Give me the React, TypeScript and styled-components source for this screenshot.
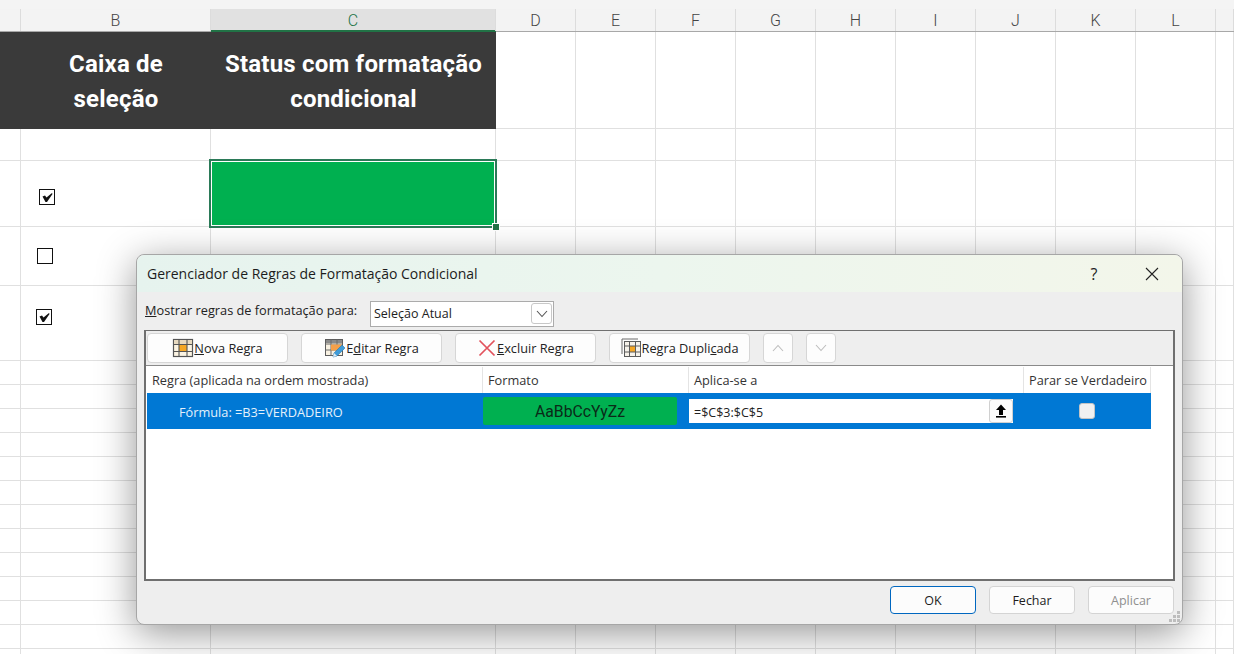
import type { ReactNode } from 'react';
import styled, { createGlobalStyle } from 'styled-components';

const GlobalStyle = createGlobalStyle`
    html, body {
        margin: 0;
        height: 100%;
        overflow: hidden;
        background: #fff;
    }
    * {
        box-sizing: border-box;
    }
`;

const uiFont = `"Open Sans", "Noto Sans", "Liberation Sans", sans-serif`;

const columns = [
    { label: '', width: 21 },
    { label: 'B', width: 190 },
    { label: 'C', width: 285 },
    ...['D', 'E', 'F', 'G', 'H', 'I', 'J', 'K', 'L'].map((label) => ({ label, width: 80 })),
    { label: '', width: 18 },
];

const rowHeights = [97, 32, 66, 59, 75, ...Array(13).fill(24)];

const checkboxes: Record<number, { left: number; top: number; checked: boolean }> = {
    2: { left: 18, top: 28, checked: true },
    3: { left: 16, top: 21, checked: false },
    4: { left: 15, top: 23, checked: true },
};

const Page = styled.div`
    position: relative;
    width: 1234px;
    height: 654px;
    overflow: hidden;
    background: #fff;
`;

const TopStrip = styled.div`
    height: 9px;
    background: #f4f4f4;
`;

const ColumnHeaderRow = styled.div`
    display: flex;
    height: 23px;
    background: #f3f3f3;
    border-bottom: 1px solid #a8a8a8;
`;

const ColumnHeader = styled.div<{ $width: number; $selected?: boolean }>`
    width: ${(p) => p.$width}px;
    flex: none;
    display: flex;
    align-items: center;
    justify-content: center;
    border-right: 1px solid #dcdcdc;
    font: 300 16px Roboto, "Liberation Sans", sans-serif;
    color: ${(p) => (p.$selected ? '#217346' : '#444')};
    background: ${(p) => (p.$selected ? '#e1e1e1' : 'transparent')};
    box-shadow: ${(p) => (p.$selected ? '0 1px 0 #217346, inset 0 -1px 0 #217346' : 'none')};
`;

const SheetGrid = styled.div`
    display: grid;
    grid-template-columns: ${columns.map((c) => `${c.width}px`).join(' ')};
    grid-template-rows: ${rowHeights.map((h) => `${h}px`).join(' ')};
`;

const Cell = styled.div`
    border-right: 1px solid #e0e0e0;
    border-bottom: 1px solid #e0e0e0;
`;

const TitleCell = styled.div`
    display: flex;
    align-items: center;
    justify-content: center;
    padding-top: 2px;
    background: #3a3a3a;
    color: #fff;
    text-align: center;
    white-space: nowrap;
    font: 700 24px/35px Roboto, "Liberation Sans", sans-serif;
    letter-spacing: 0.2px;
`;

const CheckboxCell = styled(Cell)<{ $left: number; $top: number }>`
    padding: ${(p) => p.$top}px 0 0 ${(p) => p.$left}px;
`;

const CheckBox = styled.div`
    width: 16px;
    height: 16px;
    border: 1.5px solid #111;
    background: #fff;
    display: flex;
    align-items: center;
    justify-content: center;
`;

const SelectedCell = styled.div`
    position: relative;
    height: 69px;
    width: 288px;
    margin: -2px 0 0 -2px;
    z-index: 1;
    background: #00b050;
    border: 2px solid #2b7a58;
    box-shadow: inset 0 0 0 1px #fff;
`;

const FillHandle = styled.div`
    position: absolute;
    right: -4px;
    bottom: -4px;
    width: 6px;
    height: 6px;
    background: #217346;
    outline: 1px solid #fff;
`;

const Dialog = styled.div`
    position: absolute;
    left: 136px;
    top: 254px;
    width: 1047px;
    height: 371px;
    display: flex;
    flex-direction: column;
    background: #eeeeee;
    border: 1px solid #a6a6a6;
    border-radius: 8px;
    box-shadow: 0 8px 38px rgba(0, 0, 0, 0.42);
    font: 400 12.75px ${uiFont};
    color: #222;
    z-index: 2;
`;

const TitleBar = styled.div`
    display: flex;
    align-items: center;
    height: 37px;
    flex: none;
    padding: 0 23px 0 10px;
    border-radius: 8px 8px 0 0;
    background: linear-gradient(90deg, #e6f3ee 0%, #ecf6ee 50%, #f3f6ea 100%);
`;

const DialogTitle = styled.div`
    flex: 1;
    font-size: 14px;
    color: #1c1c1c;
`;

const HelpMark = styled.div`
    width: 40px;
    font-size: 16px;
    color: #222;
    text-align: center;
    margin-right: 31px;
`;

const CloseMark = styled.svg`
    width: 14px;
    height: 14px;
    display: block;
`;

const ScopeRow = styled.div`
    display: flex;
    align-items: center;
    height: 38px;
    flex: none;
    padding: 5px 0 0 8px;
`;

const ScopeLabel = styled.div`
    width: 225px;
    margin-top: -7px;
`;

const ScopeSelect = styled.div`
    width: 184px;
    height: 26px;
    display: flex;
    align-items: center;
    justify-content: space-between;
    padding: 0 1px 0 3px;
    background: #fff;
    border: 1px solid #ababab;
    font-size: 12.5px;
`;

const SelectChevron = styled.div`
    width: 21px;
    height: 21px;
    display: flex;
    align-items: center;
    justify-content: center;
    border: 1px solid #c8c8c8;
    border-radius: 3px;
`;

const RulesPanel = styled.div`
    width: 1031px;
    height: 251px;
    margin-left: 7px;
    flex: none;
    display: flex;
    flex-direction: column;
    border: 2px solid #6f6f6f;
    border-width: 1px 2px 2px;
`;

const Toolbar = styled.div`
    height: 35px;
    flex: none;
    display: flex;
    align-items: center;
    gap: 13px;
    padding: 0 0 0 1px;
    border-bottom: 1px solid #8a8a8a;
`;

const ToolButton = styled.div<{ $width?: number }>`
    width: ${(p) => p.$width ?? 141}px;
    height: 30px;
    display: flex;
    align-items: center;
    justify-content: center;
    background: #fdfdfd;
    border: 1px solid #d6d6d6;
    border-radius: 4px;
    color: #222;
`;

const RulesList = styled.div`
    flex: 1;
    background: #fff;
    padding-left: 1px;
`;

const ListHeader = styled.div`
    display: flex;
    height: 27px;
    width: 1004px;
`;

const ListHeading = styled.div<{ $width: number }>`
    width: ${(p) => p.$width}px;
    display: flex;
    align-items: center;
    padding-left: 5px;
    border-right: 1px solid #e4e4e4;
    margin: 1px 0 0;
    white-space: nowrap;
    color: #333;
`;

const RuleRow = styled.div`
    display: flex;
    align-items: center;
    width: 1004px;
    height: 36px;
    background: #0078d4;
`;

const RuleName = styled.div`
    width: 336px;
    padding: 2px 0 0 32px;
    font-size: 12.75px;
    color: #e4f1fb;
`;

const FormatPreview = styled.div`
    width: 194px;
    height: 28px;
    margin-right: 12px;
    padding-top: 1px;
    display: flex;
    align-items: center;
    justify-content: center;
    background: #00b050;
    border-radius: 2px;
    font: 400 15.75px Roboto, "Liberation Sans", sans-serif;
    color: #0b2a18;
`;

const RangeInput = styled.div`
    width: 324px;
    height: 24px;
    display: flex;
    align-items: center;
    justify-content: space-between;
    padding-left: 5px;
    background: #fff;
    font-size: 12.5px;
    color: #222;
`;

const RangeText = styled.span`
    padding-top: 2px;
`;

const RangeButton = styled.div`
    width: 24px;
    height: 24px;
    display: flex;
    align-items: center;
    justify-content: center;
    background: #fbfbfb;
    border: 1px solid #d0d0d0;
    border-radius: 3px;
`;

const StopCell = styled.div`
    flex: 1;
    display: flex;
    justify-content: center;
    padding-left: 10px;
`;

const StopBox = styled.div`
    width: 16px;
    height: 16px;
    background: #f1f1f1;
    border: 1px solid #c4c4c4;
    border-radius: 3px;
`;

const Footer = styled.div`
    position: relative;
    flex: 1;
    display: flex;
    justify-content: flex-end;
    align-items: flex-start;
    gap: 13px;
    padding: 5px 8px 0 0;
`;

const FooterButton = styled.div<{ $primary?: boolean; $disabled?: boolean }>`
    width: 86px;
    height: 28px;
    display: flex;
    align-items: center;
    justify-content: center;
    background: #fcfcfc;
    border: 1px solid ${(p) => (p.$primary ? '#0067c0' : '#d4d4d4')};
    border-radius: 4px;
    font-size: 12.5px;
    color: ${(p) => (p.$disabled ? '#8f8f8f' : '#1c1c1c')};
`;

const Grip = styled.svg`
    position: absolute;
    right: 1px;
    bottom: 1px;
    width: 12px;
    height: 12px;
`;

const GridIcon = ({ fill = '#f5a623', children }: { fill?: string; children?: ReactNode }) => (
    <svg width="22" height="20" viewBox="0 0 22 20">
        <rect x="1.5" y="1.5" width="19" height="17" fill="#fbf3e2" stroke="#555" strokeWidth="1.2" />
        <rect x="7" y="6.5" width="8" height="7" fill={fill} />
        <rect x="2" y="2" width="18" height="4" fill="#e7d9bf" />
        <path d="M7 1.5v17M15 1.5v17M1.5 6.5h19M1.5 13.5h19" stroke="#555" strokeWidth="1.1" fill="none" />
        {children}
    </svg>
);

const EditIcon = () => (
    <svg width="22" height="20" viewBox="0 0 22 20">
        <rect x="1.5" y="1.5" width="17" height="16" fill="#f8f1e2" stroke="#5c5c5c" />
        <rect x="2" y="2" width="16" height="3" fill="#8a8a8a" />
        <path d="M7 1.5v16M13 1.5v16M1.5 6h17M1.5 12h17" stroke="#6b6b6b" fill="none" />
        <path d="M7 6.5h11v3l-5 3H7z" fill="#f5a04a" />
        <path d="M9 19l1-4 8-8 3 3-8 8z" fill="#3f9bd8" stroke="#2678b3" strokeWidth="0.6" />
        <path d="M9 19l1-4 3 3z" fill="#dfeaf2" />
    </svg>
);

const DeleteIcon = () => (
    <svg width="20" height="20" viewBox="0 0 20 20">
        <path d="M2.5 2.5l15 15M17.5 2.5l-15 15" stroke="#e2525c" strokeWidth="1.7" fill="none" />
    </svg>
);

const DuplicateIcon = () => (
    <svg width="21" height="20" viewBox="0 0 21 20">
        <path d="M1 16V1h16" stroke="#6b6b6b" strokeWidth="1" fill="none" />
        <rect x="3.5" y="3.5" width="16" height="15" fill="#f6f2ea" stroke="#5c5c5c" />
        <rect x="8.5" y="8" width="6" height="6" fill="#f5a623" />
        <path d="M8.5 3.5v15M14.5 3.5v15M3.5 8h16M3.5 14h16" stroke="#5c5c5c" fill="none" />
    </svg>
);

const Chevron = ({ up, color }: { up?: boolean; color: string }) => (
    <svg width="12" height="8" viewBox="0 0 12 8">
        <path d={up ? 'M1 7l5-5.5L11 7' : 'M1 1l5 5.5L11 1'} stroke={color} strokeWidth="1.1" fill="none" />
    </svg>
);

const CheckMark = () => (
    <svg width="11" height="11" viewBox="0 0 11 11">
        <path d="M0.5 4.5L3 3.5l1.5 2L10 1l0.5 1L5 10H3.5z" fill="#111" />
    </svg>
);

export default function App() {
    const rows = rowHeights.map((_, rowIndex) =>
        columns.map((column, colIndex) => {
            const key = `${rowIndex}-${colIndex}`;
            if (rowIndex === 0 && colIndex < 3) {
                if (colIndex === 1) return <TitleCell key={key}>Caixa de<br />seleção</TitleCell>;
                if (colIndex === 2) return <TitleCell key={key}>Status com formatação<br />condicional</TitleCell>;
                return <TitleCell key={key} />;
            }
            if (rowIndex === 2 && colIndex === 2) {
                return <SelectedCell key={key}><FillHandle /></SelectedCell>;
            }
            if (colIndex === 1 && checkboxes[rowIndex]) {
                const box = checkboxes[rowIndex];
                return (
                    <CheckboxCell key={key} $left={box.left} $top={box.top}>
                        <CheckBox>{box.checked && <CheckMark />}</CheckBox>
                    </CheckboxCell>
                );
            }
            return <Cell key={key} />;
        })
    );

    return (
        <Page>
            <GlobalStyle />
            <TopStrip />
            <ColumnHeaderRow>
                {columns.map((column, index) => (
                    <ColumnHeader key={index} $width={column.width} $selected={column.label === 'C'}>
                        {column.label}
                    </ColumnHeader>
                ))}
            </ColumnHeaderRow>
            <SheetGrid>{rows}</SheetGrid>

            <Dialog>
                <TitleBar>
                    <DialogTitle>Gerenciador de Regras de Formatação Condicional</DialogTitle>
                    <HelpMark>?</HelpMark>
                    <CloseMark viewBox="0 0 14 14">
                        <path d="M1 1l12 12M13 1L1 13" stroke="#222" strokeWidth="1.1" fill="none" />
                    </CloseMark>
                </TitleBar>

                <ScopeRow>
                    <ScopeLabel><u>M</u>ostrar regras de formatação para:</ScopeLabel>
                    <ScopeSelect>
                        Seleção Atual
                        <SelectChevron><Chevron color="#555" /></SelectChevron>
                    </ScopeSelect>
                </ScopeRow>

                <RulesPanel>
                    <Toolbar>
                        <ToolButton><GridIcon /><span><u>N</u>ova Regra</span></ToolButton>
                        <ToolButton><EditIcon /><span>E<u>d</u>itar Regra</span></ToolButton>
                        <ToolButton><DeleteIcon /><span><u>E</u>xcluir Regra</span></ToolButton>
                        <ToolButton><DuplicateIcon /><span>Regra Dupli<u>c</u>ada</span></ToolButton>
                        <ToolButton $width={30}><Chevron up color="#bdbdbd" /></ToolButton>
                        <ToolButton $width={30}><Chevron color="#bdbdbd" /></ToolButton>
                    </Toolbar>
                    <RulesList>
                        <ListHeader>
                            <ListHeading $width={336}>Regra (aplicada na ordem mostrada)</ListHeading>
                            <ListHeading $width={206}>Formato</ListHeading>
                            <ListHeading $width={335}>Aplica-se a</ListHeading>
                            <ListHeading $width={127}>Parar se Verdadeiro</ListHeading>
                        </ListHeader>
                        <RuleRow>
                            <RuleName>Fórmula: =B3=VERDADEIRO</RuleName>
                            <FormatPreview>AaBbCcYyZz</FormatPreview>
                            <RangeInput>
                                <RangeText>=$C$3:$C$5</RangeText>
                                <RangeButton>
                                    <svg width="12" height="14" viewBox="0 0 12 14">
                                        <path d="M6 0.5L11 6H8v5H4V6H1z" fill="#000" />
                                        <rect x="1" y="12" width="10" height="1.6" fill="#000" />
                                    </svg>
                                </RangeButton>
                            </RangeInput>
                            <StopCell><StopBox /></StopCell>
                        </RuleRow>
                    </RulesList>
                </RulesPanel>

                <Footer>
                    <FooterButton $primary>OK</FooterButton>
                    <FooterButton>Fechar</FooterButton>
                    <FooterButton $disabled>Aplicar</FooterButton>
                    <Grip viewBox="0 0 12 12">
                        <path d="M8 0h3v3H8zM4 4h3v3H4zM8 4h3v3H8zM0 8h3v3H0zM4 8h3v3H4zM8 8h3v3H8z" fill="#bdbdbd" />
                    </Grip>
                </Footer>
            </Dialog>
        </Page>
    );
}
